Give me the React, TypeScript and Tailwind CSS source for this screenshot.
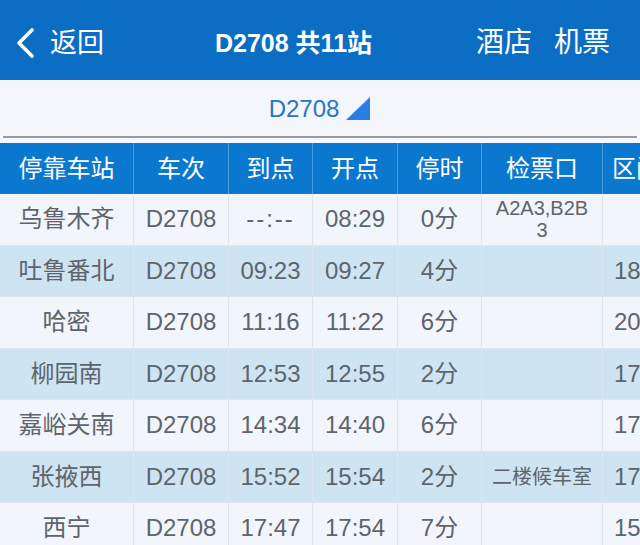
import { Fragment } from 'react';

const FONT = "font-['Liberation_Sans','Noto_Sans_CJK_SC',sans-serif]";

type Row = {
  station: string;
  train: string;
  arrive: string;
  depart: string;
  stay: string;
  gate: string;
  dist: string;
};

const rows: Row[] = [
  { station: '乌鲁木齐', train: 'D2708', arrive: '--:--', depart: '08:29', stay: '0分', gate: 'A2A3,B2B3', dist: '' },
  { station: '吐鲁番北', train: 'D2708', arrive: '09:23', depart: '09:27', stay: '4分', gate: '', dist: '187' },
  { station: '哈密', train: 'D2708', arrive: '11:16', depart: '11:22', stay: '6分', gate: '', dist: '204' },
  { station: '柳园南', train: 'D2708', arrive: '12:53', depart: '12:55', stay: '2分', gate: '', dist: '176' },
  { station: '嘉峪关南', train: 'D2708', arrive: '14:34', depart: '14:40', stay: '6分', gate: '', dist: '173' },
  { station: '张掖西', train: 'D2708', arrive: '15:52', depart: '15:54', stay: '2分', gate: '二楼候车室', dist: '178' },
  { station: '西宁', train: 'D2708', arrive: '17:47', depart: '17:54', stay: '7分', gate: '', dist: '152' },
];

const COLS = 'grid-cols-[134px_95px_84px_85px_84px_121px_80px]';

export default function App() {
  return (
    <div className={`w-[640px] h-[545px] overflow-hidden bg-white ${FONT}`}>
      {/* ── Top bar ── */}
      <header className="h-[80px] bg-[#0c6dc4] flex items-center pt-[6px] text-white">
        <div className="w-[215px] flex items-center pl-[14px] gap-[14px]">
          <svg width="22" height="32" viewBox="0 0 22 32" fill="none">
            <polyline points="18,3 5,16 18,29" stroke="white" strokeWidth="3.6" strokeLinecap="round" strokeLinejoin="round" />
          </svg>
          <span className="text-[27px] leading-none">返回</span>
        </div>
        <div className="text-[25px] font-bold leading-none">D2708 共11站</div>
        <div className="flex-1 flex items-center justify-end gap-[22px] pr-[30px] text-[28px] leading-none">
          <span>酒店</span>
          <span>机票</span>
        </div>
      </header>

      {/* ── Train selector ── */}
      <div className="h-[56px] bg-[#f3f6fb] flex items-center justify-center gap-[7px] pt-[2px]">
        <span className="text-[24px] text-[#2674d0] leading-none">D2708</span>
        <svg width="25" height="24" viewBox="0 0 25 24">
          <polygon points="24,0 24,23 0,23" fill="#2a7ee3" />
        </svg>
      </div>
      <div className="mx-[3px] h-[2px] bg-[#9b9b98]" />
      <div className="h-[5px] bg-[#f6f8fb]" />

      {/* ── Timetable ── */}
      <div className={`grid ${COLS} w-[683px]`}>
        {['停靠车站', '车次', '到点', '开点', '停时', '检票口', '区间'].map((h, i) => (
          <div
            key={h}
            className={`h-[51px] bg-[#0b78cf] text-white text-[24px] flex items-center ${i === 6 ? 'justify-start pl-[9px]' : 'justify-center'} ${i < 6 ? 'border-r border-[#4a9ede]' : ''}`}
          >
            {h}
          </div>
        ))}

        {rows.map((r, idx) => {
          const bg = idx % 2 === 0 ? 'bg-[#f2f6fc]' : 'bg-[#cfe4f3]';
          const cell = `h-[51.5px] ${bg} text-[#5e646b] text-[24px] flex items-center justify-center border-r border-b border-[#dfe5ec]`;
          return (
            <Fragment key={r.station}>
              <div className={cell}>{r.station}</div>
              <div className={cell}>{r.train}</div>
              <div className={cell}>
                <span className={r.arrive === '--:--' ? 'tracking-[2px]' : ''}>{r.arrive}</span>
              </div>
              <div className={cell}>{r.depart}</div>
              <div className={cell}>{r.stay}</div>
              <div className={`${cell} px-[10px]`}>
                {r.gate && (
                  <span className="text-center break-all text-[20px] leading-[22px]">{r.gate}</span>
                )}
              </div>
              <div className={`h-[51.5px] ${bg} text-[#5e646b] text-[24px] flex items-center justify-start pl-[11px] border-b border-[#dfe5ec]`}>
                {r.dist}
              </div>
            </Fragment>
          );
        })}
      </div>
    </div>
  );
}
